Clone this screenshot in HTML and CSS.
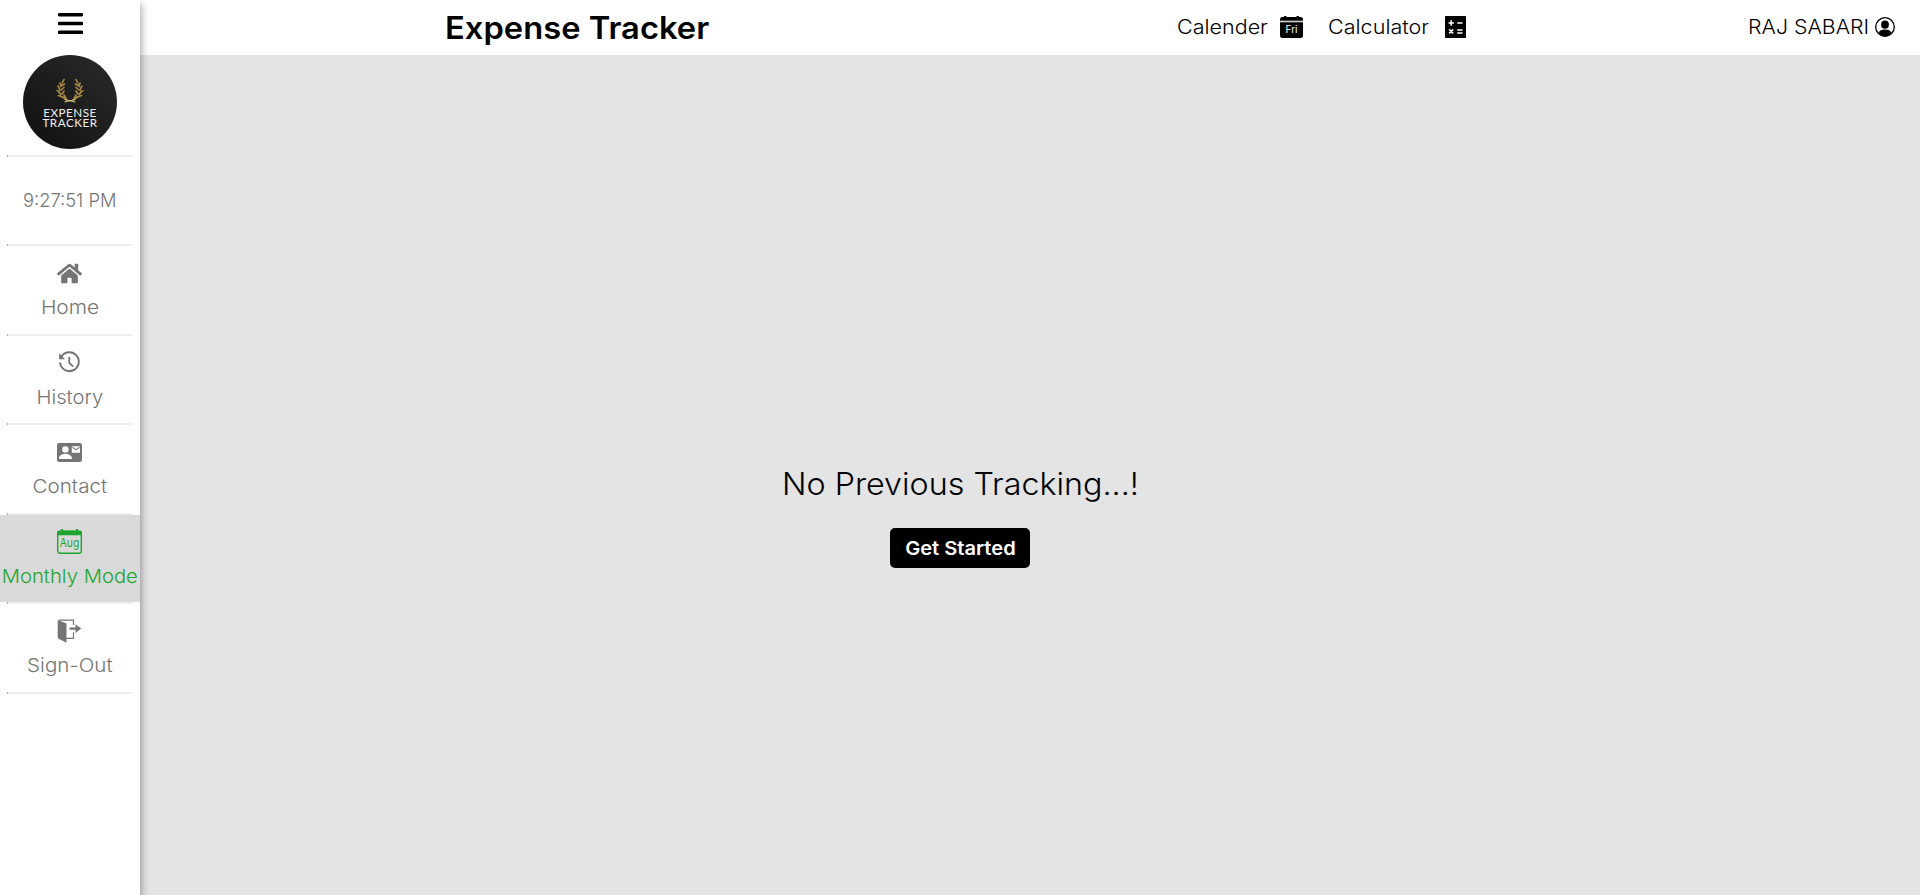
FILE: index.html
```html
<!DOCTYPE html>
<html lang="en">
<head>
<meta charset="utf-8">
<title>Expense Tracker</title>
<link rel="stylesheet" href="styles.css">
</head>
<body>
<aside class="sidebar">
  <button class="menu" aria-label="Menu"><svg width="25" height="23" viewBox="0 0 25 23"><path d="M1.5 2.700h22M1.500 11.500h22M1.500 20.300h22" stroke="#000" stroke-width="3.600" stroke-linecap="round"/></svg></button>
  <div class="logo">
    <svg class="wreath" width="28" height="25" viewBox="0 0 28 25" fill="none" stroke="#a88a45"><path d="M11 22C3 20 1 12 6 5M17 22c8-2 10-10 5-17" stroke-width=".9"/><path d="M11 22L7.500 19M10 20.500L8 17M6.500 19L2.500 17.500M5 16L1 12.500M4 12L2 8M5 8L4 5M6.500 4.500l1.500-3M5.500 8l3-2M5 12l3-2.500M6 16l2-3M17 22l3.500-3M18 20.500l2-3.500M21.500 19l4-1.500M23 16l4-3.500M24 12l2-4M23 8l1-3M21.500 4.500L20 1.500M22.500 8l-3-2M23 12l-3-2.500M22 16l-2-3" stroke-width="1.600" stroke-linecap="round"/><path d="M8.500 24l11-2.500M8.500 21.500l11 2.500" stroke="#d8c47c"/></svg>
    <span class="logo-text">EXPENSE</span><span class="logo-text">TRACKER</span>
  </div>
  <hr>
  <div class="clock"><span class="t-clock">9:27:51 PM</span></div>
  <hr>
  <a class="item"><svg class="icon" viewBox="0 0 576 512" fill="currentColor"><path d="M280.400 148.300L96 300.100V464a16 16 0 0 0 16 16l112.100-.3a16 16 0 0 0 15.900-16V368a16 16 0 0 1 16-16h64a16 16 0 0 1 16 16v95.600a16 16 0 0 0 16 16.100L464 480a16 16 0 0 0 16-16V300L295.700 148.300a12.200 12.200 0 0 0-15.300 0zM571.600 251.500L488 182.600V44.100a12 12 0 0 0-12-12h-56a12 12 0 0 0-12 12v72.600L318.500 43a48 48 0 0 0-61 0L4.300 251.500a12 12 0 0 0-1.600 16.900l25.500 31a12 12 0 0 0 16.900 1.600L280.400 107.200a12.200 12.200 0 0 1 15.300 0L531 301a12 12 0 0 0 16.900-1.600l25.500-31a12 12 0 0 0-1.800-16.900z"/></svg><span class="t-home">Home</span></a>
  <hr>
  <a class="item"><svg class="icon" viewBox="0 0 25 25" fill="none" stroke="currentColor"><path d="M4.200 7A9.400 9.400 0 1 1 3 12.500" stroke-width="2"/><path d="M2.100 3.200v6H8z" fill="currentColor" stroke="none"/><path d="M12.300 7v6l4 3.600" stroke-width="1.800"/></svg><span class="t-history">History</span></a>
  <hr>
  <a class="item"><svg class="icon" viewBox="0 0 25 25"><rect y="3" width="25" height="19" rx="2.200" fill="currentColor"/><circle cx="8.400" cy="9.400" r="3.200" fill="#fff"/><path d="M2 18.900v-1c0-2.500 4-4.100 6.400-4.100s6.500 1.600 6.500 4.100v1zM14.800 6.200H23v6.500h-8.200z" fill="#fff"/><path d="M15.400 7.200l3.500 2.700 3.500-2.700" fill="none" stroke="currentColor" stroke-width="1.100"/></svg><span class="t-contact">Contact</span></a>
  <hr>
  <a class="item active"><svg class="icon" viewBox="0 0 25 25"><rect x=".7" y="2.500" width="23.600" height="21.700" rx="2.500" fill="none" stroke="currentColor" stroke-width="1.400"/><path d="M0 6.200V4a2.500 2.500 0 0 1 2.500-2.500H4V0h2v1.500h13V0h2v1.500h1.500A2.500 2.500 0 0 1 25 4v2.200z" fill="currentColor"/><text x="12.500" y="17.800" text-anchor="middle" class="month" textLength="19.500" lengthAdjust="spacingAndGlyphs">Aug</text></svg><span class="t-monthly">Monthly Mode</span></a>
  <hr>
  <a class="item"><svg class="icon" viewBox="0 0 25 25" fill="none" stroke="currentColor"><path d="M.7 .9L9.500 4.500v19.200L2.100 20Q.7 19.500 .7 18z" fill="currentColor" stroke="none"/><path d="M1.800 1.100h14.700v5M9 19.300h7.500v-6" stroke-width="1.200"/><path d="M12.500 8.400h6V5.300l5.700 4.300-5.700 4.300v-3.100h-6z" fill="currentColor" stroke="none"/></svg><span class="t-sign">Sign-Out</span></a>
  <hr>
</aside>
<div class="page">
  <header class="topbar">
    <h1 class="title"><span class="t-title">Expense Tracker</span></h1>
    <nav class="tools">
      <a class="tool calendar"><span class="t-calender">Calender</span><svg width="23" height="22" viewBox="0 0 23 22"><path d="M0 4.800V3.200Q0 1 2.500 1H4V0h2.500v1h10V0H19v1h1.500Q23 1 23 3.200v1.600zM0 6.300h23v13.200q0 2.500-2.500 2.500h-18Q0 22 0 19.500z"/><path d="M0 5.500h23" stroke="#ccc" stroke-width="1.100"/><text x="11.500" y="17" text-anchor="middle" class="day" textLength="12" lengthAdjust="spacingAndGlyphs">Fri</text></svg></a>
      <a class="tool calculator"><span class="t-calculator">Calculator</span><svg width="21" height="22" viewBox="0 0 21 22"><rect width="21" height="22" rx=".8"/><path d="M3.500 7h5.400M6.200 4.300v5.400M12.200 7h5.300M12.200 14h5.300M12.200 17h5.300M4.200 13.400l4 4M8.200 13.400l-4 4" stroke="#fff" stroke-width="1.500"/></svg></a>
    </nav>
    <div class="user"><span class="t-user">RAJ SABARI</span><svg width="20" height="20" viewBox="0 0 20 20"><circle cx="10" cy="10" r="9.300" fill="none" stroke="#000" stroke-width="1.300"/><ellipse cx="10" cy="7.700" rx="3.900" ry="4.100"/><path d="M3.300 16.500Q4.300 12.600 10 12.600t6.700 3.900Q14 19.400 10 19.400t-6.700-2.900z"/></svg></div>
  </header>
  <main class="empty">
    <h2 class="message"><span class="t-message">No Previous Tracking...!</span></h2>
    <button class="start"><span class="t-start">Get Started</span></button>
  </main>
</div>
</body>
</html>
```
FILE: styles.css
```css
* { box-sizing: border-box; }
body { margin: 0; height: 895px; overflow: hidden; display: flex; background: #e4e4e4; font-family: Inter, sans-serif; font-weight: 300; color: #000; }
button { border: 0; padding: 0; background: none; font: inherit; }
svg { display: block; flex: none; }
span { display: inline-block; white-space: nowrap; }
.sidebar { position: relative; z-index: 1; flex: 0 0 140px; height: 895px; background: #fff; display: flex; flex-direction: column; align-items: center; box-shadow: 1px 4px 8px rgba(0,0,0,.38); color: #757575; font-size: 18.700px; }
.menu { height: 55px; padding-top: 12px; display: flex; align-items: flex-start; flex: none; }
.logo { width: 94px; height: 94px; border-radius: 50%; background: linear-gradient(45deg, #101010, #2b2b2b); display: flex; flex-direction: column; align-items: center; padding-top: 23px; margin-bottom: 6px; flex: none; }
.logo-text { font: 11.700px/11px Lato, sans-serif; color: #eee; letter-spacing: .5px; }
.logo-text + .logo-text { margin-top: -.5px; }
.wreath { margin-bottom: 3.500px; }
hr { width: 126px; height: 2px; margin: 0; border: 0; border-left: 1px solid #aaa; background: #eee; flex: none; }
.clock, .item { width: 140px; height: 87.450px; flex: none; display: flex; flex-direction: column; align-items: center; }
.clock { justify-content: center; }
.item { padding-top: 14.500px; }
.item span { line-height: 24px; margin-top: 10.500px; }
.icon { width: 25px; height: 25px; margin-right: 1px; }
.active { background: #d9d9d9; color: #1fa52e; }
.month { font: 12px Inter, sans-serif; fill: currentColor; }
.day { font: 10px Inter, sans-serif; fill: #fff; }
.page { flex: 1; display: flex; flex-direction: column; }
.topbar { height: 55px; background: #fff; display: flex; align-items: center; padding: 0 25px 0 304.500px; font-size: 19.500px; }
.topbar span { transform-origin: left; padding-bottom: 1px; }
.title { margin: 0; font-size: 31px; font-weight: 560; width: 732.500px; }
.tools { display: flex; gap: 25px; }
.tool, .user { display: flex; align-items: center; justify-content: space-between; }
.tool svg { margin-top: -1px; }
.calendar { width: 126px; }
.calculator { width: 138px; }
.user { margin-left: auto; width: 147px; }
.user svg { margin-top: -1px; }
.empty { flex: 1; display: flex; flex-direction: column; align-items: center; padding: 409px 140px 0 0; }
.message { margin: 0 0 24px; font-size: 31px; line-height: 40px; font-weight: 300; }
.start { width: 140px; height: 40px; border-radius: 5px; background: #000; color: #fff; font-size: 18.700px; font-weight: 600; }

/* wide letterforms */
.t-clock { transform: scaleX(.98); }
.t-home { transform: scaleX(1.12); }
.t-history { transform: scaleX(1.08); }
.t-contact { transform: scaleX(1.1); }
.t-monthly { transform: scaleX(1.085); }
.t-sign { transform: scaleX(1.1); }
.t-title { transform: scaleX(1.055); }
.t-calender { transform: scaleX(1.104); }
.t-calculator { transform: scaleX(1.107); }
.t-user { transform: scaleX(1.094); }
.t-message { transform: scaleX(1.041); }
.t-start { transform: scaleX(1.075); }
```
